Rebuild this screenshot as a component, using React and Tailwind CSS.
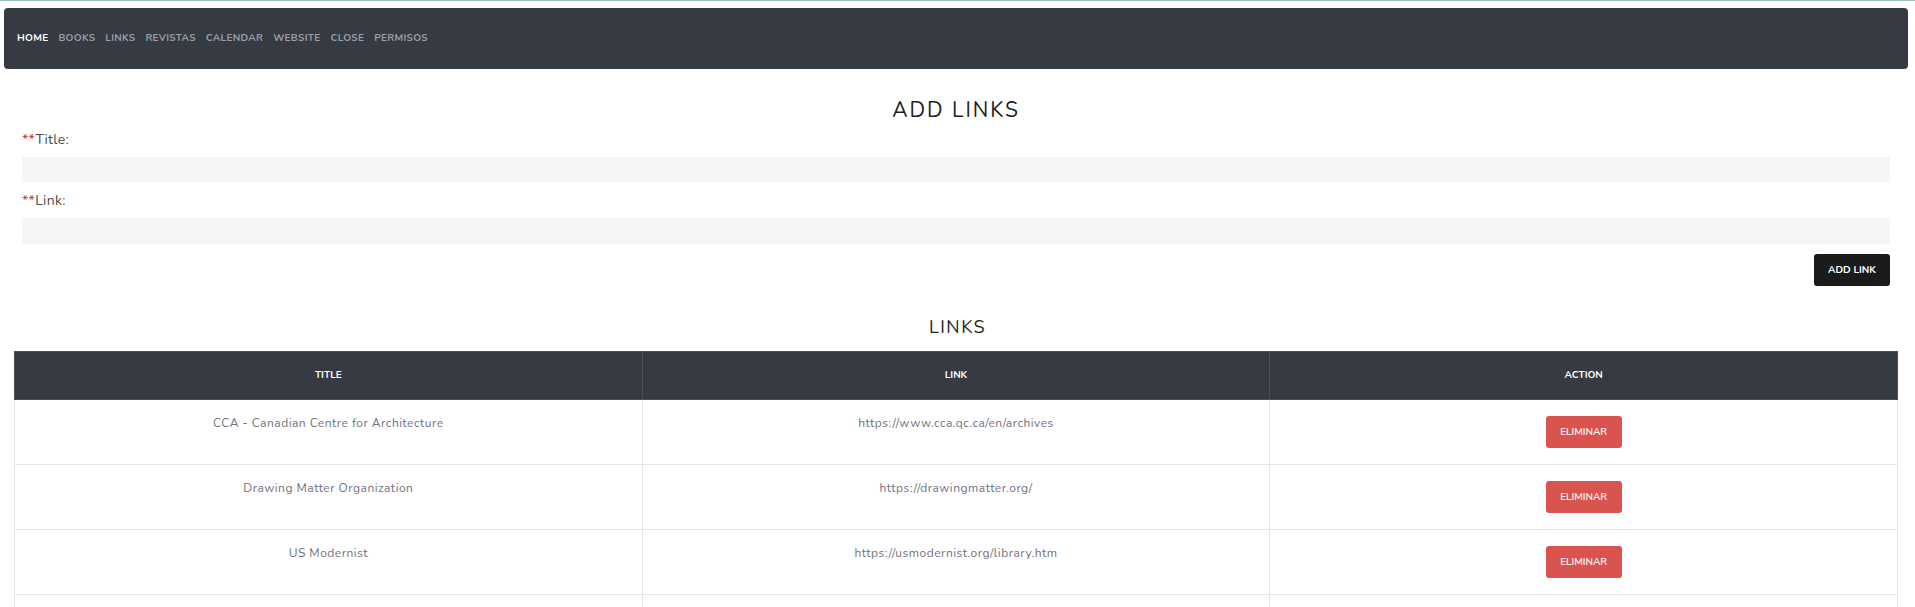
const navItems = ['HOME', 'BOOKS', 'LINKS', 'REVISTAS', 'CALENDAR', 'WEBSITE', 'CLOSE', 'PERMISOS'];

const links = [
  { title: 'CCA - Canadian Centre for Architecture', url: 'https://www.cca.qc.ca/en/archives' },
  { title: 'Drawing Matter Organization', url: 'https://drawingmatter.org/' },
  { title: 'US Modernist', url: 'https://usmodernist.org/library.htm' },
];

export default function App() {
  return (
    <div className="min-h-screen bg-white border-t border-[#9bbfc2] font-['Nunito','Lato',sans-serif]">
      <nav className="mt-[7px] ml-[4px] mr-[7px] h-[61px] rounded-[4px] bg-[#363a42] flex items-center pl-[8px]">
        <ul className="flex items-center">
          {navItems.map((item, i) => (
            <li key={item}>
              <a
                href="#"
                className={`block px-[5px] text-[10px] font-bold tracking-[0.3px] ${i === 0 ? 'text-white' : 'text-[#9a9ea6]'}`}
              >
                {item}
              </a>
            </li>
          ))}
        </ul>
      </nav>

      <section className="px-[22px] mr-[3px]">
        <h1 className="mt-[29px] text-center text-[21px] leading-[25px] tracking-[2px] text-[#1f1f1f]">ADD LINKS</h1>

        <label className="block mt-[6px] text-[14px] leading-[21px] text-[#4a4a4a] tracking-[0.3px]">
          <span className="text-[#c0392b]">**</span>Title:
        </label>
        <input type="text" className="block w-full mt-[7px] h-[25px] bg-[#f5f6f8] outline-none px-2 text-sm" />

        <label className="block mt-[8px] text-[14px] leading-[21px] text-[#4a4a4a] tracking-[0.3px]">
          <span className="text-[#c0392b]">**</span>Link:
        </label>
        <input type="text" className="block w-full mt-[7px] h-[26px] bg-[#f5f6f8] outline-none px-2 text-sm" />

        <div className="flex justify-end mt-[10px]">
          <button className="w-[76px] h-[32px] rounded-[3px] bg-[#1b1b1b] text-white text-[10px] font-bold">ADD LINK</button>
        </div>
      </section>

      <h2 className="mt-[30px] text-center text-[18px] leading-[22px] tracking-[1.5px] text-[#1f1f1f]">LINKS</h2>

      <div className="mt-[13px] ml-[14px] mr-[17px]">
        <table className="w-full table-fixed border-collapse text-center">
          <thead>
            <tr className="bg-[#363a42] text-white">
              {['TITLE', 'LINK', 'ACTION'].map((h) => (
                <th key={h} className="h-[48px] border border-[#4a5058] text-[10px] font-bold align-middle">
                  {h}
                </th>
              ))}
            </tr>
          </thead>
          <tbody>
            {links.map((l) => (
              <tr key={l.url}>
                <td className="border border-[#e3e5e8] px-3 pt-[12px] align-top text-[12px] leading-[22px] tracking-[0.5px] text-[#6f717e]">
                  {l.title}
                </td>
                <td className="border border-[#e3e5e8] px-3 pt-[12px] align-top text-[12px] leading-[22px] tracking-[0.5px] text-[#6f717e]">
                  {l.url}
                </td>
                <td className="border border-[#e3e5e8] px-3 py-[12px] align-top">
                  <button className="my-[4px] w-[76px] h-[32px] rounded-[3px] bg-[#d9534f] text-white text-[10px] font-semibold">
                    ELIMINAR
                  </button>
                </td>
              </tr>
            ))}
            <tr className="h-[64px]">
              <td className="border border-[#e3e5e8]" />
              <td className="border border-[#e3e5e8]" />
              <td className="border border-[#e3e5e8]" />
            </tr>
          </tbody>
        </table>
      </div>
    </div>
  );
}
